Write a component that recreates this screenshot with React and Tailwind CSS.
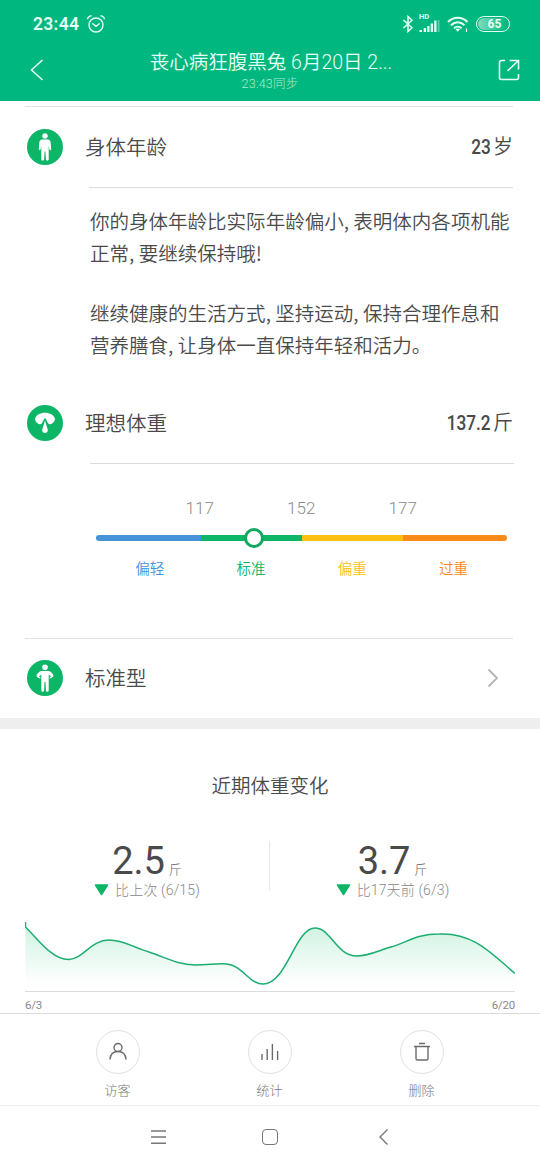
const zones = [
  { name: '偏轻', bar: 'w-[105px] rounded-l-full bg-[#4592d9]', label: 'text-[#4592d9]' },
  { name: '标准', bar: 'w-[101px] bg-[#0db566]', label: 'text-[#0db566]' },
  { name: '偏重', bar: 'w-[101px] bg-[#fdc010]', label: 'text-[#fdc010]' },
  { name: '过重', bar: 'w-[104px] rounded-r-full bg-[#f98a1b]', label: 'text-[#f98a1b]' },
];

const limits = [117, 152, 177];

const changes = [
  { value: '2.5', note: '比上次 (6/15)' },
  { value: '3.7', note: '比17天前 (6/3)' },
];

const curve =
  'M0.5 0V5C12 16 27 38 44 37.5C58 37 66 18 84 18C99 18 107 25 124 30C140 35 152 43 170 43C184 43 192 41 202 42C218 44 224 62 238 62C262 62 270 6 290 6C306 6 311 34 332 34C344 34 355 28 366 25C383 20 392 12 414 12C448 10 467 32 490 51.5';

function StatusBar() {
  return (
    <div className="flex h-12 items-center pl-[33px] pr-[30px] text-[#e4fff4]">
      <span className="w-[53px] text-[17.5px] font-semibold tracking-[0.3px]">23:44</span>
      <svg width="20" height="20" viewBox="0 0 20 20" fill="none" stroke="currentColor" strokeWidth="1.4" strokeLinecap="round">
        <circle cx="10" cy="11" r="7" />
        <path d="M6.8 9.8L10 12.3L13.2 9.8M1.5 4.6C2.2 3.2 3.4 2.2 5 1.8M18.5 4.6C17.8 3.2 16.6 2.2 15 1.8" />
      </svg>
      <div className="flex-1" />
      <svg width="12" height="18" viewBox="0 0 12 18" fill="none" stroke="currentColor" strokeWidth="1.5">
        <path d="M1.5 5L10 12.8L6 16.5V1.5L10 5.2L1.5 13" />
      </svg>
      <div className="ml-[5px] flex w-[21px] flex-col pb-[3px]">
        <span className="h-[7px] text-[7.5px] font-bold leading-[7px]">HD</span>
        <svg width="21" height="12" viewBox="0 0 21 12" fill="currentColor">
          <path d="M0.5 10h2.5v2H0.5zM4.7 8h2.3v4h-2.3zM8.2 6h2.3v6H8.2zM11.7 3.5h2.3v8.5h-2.3zM15.2 0.5h2.3v11.5h-2.3z" />
          <path opacity="0.35" d="M18.7 0H20.5V12H18.7z" />
        </svg>
      </div>
      <svg className="ml-[7px]" width="23" height="17" viewBox="0 0 23 17" fill="none" stroke="currentColor" strokeWidth="2">
        <path d="M1 6C6.5 0.3 15 0.3 20.5 6M4 9.2C8 5.2 13.5 5.2 17.5 9.2M7 12.2C9.2 10.2 12.3 10.2 14.5 12.2" />
        <path d="M8.5 13.3C9.8 12.3 11.7 12.3 13 13.3L10.7 15.8z" fill="currentColor" stroke="none" />
        <path d="M19.5 12.5V16" strokeWidth="1.2" />
      </svg>
      <div className="ml-[6px] flex h-4 w-[34px] items-center rounded-full border-[1.5px] border-current p-px">
        <div className="flex h-full w-[29px] items-center justify-center rounded-full bg-gradient-to-r from-white/50 to-transparent pl-1 text-[12px] font-bold leading-none">65</div>
      </div>
    </div>
  );
}

function Header() {
  return (
    <header className="h-[101px] bg-[#00b87f]">
      <StatusBar />
      <div className="flex h-[46px] items-start justify-between pl-[30px] pr-[20px] text-[#e8fff6]">
        <svg className="mt-[11px]" width="14" height="22" viewBox="0 0 14 22" fill="none" stroke="currentColor" strokeWidth="1.5">
          <path d="M12.5 1L1.5 11L12.5 21" />
        </svg>
        <div className="flex flex-col items-center pt-px">
          <h1 className="h-[27px] whitespace-nowrap text-[19.5px] font-[350] leading-[27px]">丧心病狂腹黑兔 6月20日 2...</h1>
          <span className="mr-0.5 h-4 text-[12.5px] font-light leading-4 tracking-[0.2px] text-[#a9ecd3]">23:43同步</span>
        </div>
        <svg className="mt-[11px]" width="22" height="22" viewBox="0 0 22 22" fill="none" stroke="currentColor" strokeWidth="1.6">
          <path d="M7 1.5H3.5A2 2 0 0 0 1.5 3.5V18.500A2 2 0 0 0 3.500 20.500H18.500A2 2 0 0 0 20.500 18.500V15" />
          <path d="M11.5 1.5H20.5V10.5M20.5 1.5L9.5 12" />
        </svg>
      </div>
    </header>
  );
}

function Badge({ children }) {
  return (
    <svg width="36" height="36" viewBox="0 0 36 36" fill="#fff">
      <circle cx="18" cy="18" r="18" fill="#0db566" />
      {children}
    </svg>
  );
}

function Row({ icon, title, children, className }) {
  return (
    <div className={`flex items-center pl-[27px] text-[#4a4a4a] ${className}`}>
      {icon}
      <h2 className="ml-[22px] flex-1 pt-[3px] text-[20.5px] font-[350]">{title}</h2>
      {children}
    </div>
  );
}

function Amount({ value, unit }) {
  return (
    <div className="flex items-baseline pt-px text-[20px] font-[350]">
      <span className="inline-block origin-right scale-x-[0.82] text-[21px] font-medium">{value}</span>
      <span className="ml-[2px]">{unit}</span>
    </div>
  );
}

function WeightScale() {
  return (
    <div className="h-[174px] pl-[96px] pr-[33px] pt-[32px]">
      <div className="flex h-6 pl-[53px] text-[17px] font-light leading-6 text-[#8c8c8c]">
        {limits.map((n) => (
          <span key={n} className="w-[101.5px] text-center">{n}</span>
        ))}
      </div>
      <div className="relative mt-[15px] flex h-[6px]">
        {zones.map((z) => (
          <div key={z.name} className={z.bar} />
        ))}
        <div className="absolute -top-[7px] left-[148px] size-5 rounded-full border-[3px] border-[#14a760] bg-white" />
      </div>
      <div className="mt-[17px] flex pl-[3px] text-[14.5px] font-[350] leading-6">
        {zones.map((z) => (
          <span key={z.name} className={`w-[101.3px] text-center ${z.label}`}>{z.name}</span>
        ))}
      </div>
    </div>
  );
}

function Trend() {
  return (
    <section className="h-[284px]">
      <h2 className="pt-[44px] text-center text-[19.5px] font-[350] leading-7 text-[#4a4a4a]">近期体重变化</h2>
      <div className="mt-[40px] flex h-[60px]">
        {changes.map((c, i) => (
          <div key={c.value} className={i === 0 ? 'w-[270px] pl-[25px]' : 'w-[270px] pr-[25px]'}>
            <div className={i === 0 ? 'flex h-[50px] flex-col items-center border-r border-[#e8e8e8]' : 'flex h-[50px] flex-col items-center'}>
              <div className="flex h-[37px] items-baseline leading-[40px] text-[#4a4a4a]">
                <span className="text-[38px]">{c.value}</span>
                <span className="ml-1 text-[13px] font-light text-[#666]">斤</span>
              </div>
              <div className="flex items-center whitespace-nowrap text-[14px] font-light leading-6 tracking-[0.15px] text-[#888]">
                <svg className="mr-[6px]" width="15" height="12" viewBox="0 0 15 12">
                  <path d="M1.5 1H13.5L7.5 10.5Z" fill="#0db566" stroke="#0db566" strokeWidth="1.5" strokeLinejoin="round" />
                </svg>
                {c.note}
              </div>
            </div>
          </div>
        ))}
      </div>
      <div className="mx-[25px] mt-[21px] h-[70px] border-b border-[#dcdcdc]">
        <svg width="490" height="69" viewBox="0 0 490 69" fill="none">
          <defs>
            <linearGradient id="fade" x1="0" y1="0" x2="0" y2="1">
              <stop offset="0" stopColor="#cdf2e0" />
              <stop offset="0.9" stopColor="#fff" />
            </linearGradient>
          </defs>
          <path d={`${curve}V69H0.5Z`} fill="url(#fade)" />
          <path d={curve} stroke="#1bae70" strokeWidth="1.5" />
        </svg>
      </div>
      <div className="flex justify-between px-[25px] pt-[5px] text-[11.5px] leading-[17px] tracking-[-0.2px] text-[#888]">
        <span>6/3</span>
        <span>6/20</span>
      </div>
    </section>
  );
}

function Action({ label, children }) {
  return (
    <button className="flex w-[152px] flex-col items-center pt-[15.5px]">
      <span className="flex size-11 items-center justify-center rounded-full border border-[#e2e2e2]">
        <svg width="20" height="20" viewBox="0 0 20 20" fill="none" stroke="#6b6b6b" strokeWidth="1.4">
          {children}
        </svg>
      </span>
      <span className="mt-[6px] text-[13px] font-light leading-[22px] text-[#777]">{label}</span>
    </button>
  );
}

export default function App() {
  return (
    <div className="h-[1170px] w-[540px] overflow-hidden bg-white font-['Roboto','Noto_Sans_CJK_SC',sans-serif]">
      <Header />

      <main>
        <div className="ml-[25px] mr-[27px] mt-[5px] border-t border-[#e2e2e2]" />
        <Row
          className="h-20 pr-[27px]"
          title="身体年龄"
          icon={
            <Badge>
              <circle cx="18" cy="7" r="2.7" />
              <path d="M15 10.5H21C22.7 10.5 23.5 12 23.7 14L24.2 20C24.2 21.5 22.7 21.5 22.4 20.3L21.7 16.5V30.5C21.7 32 19 32 18.9 30.5L18.4 22.5H17.6L17.1 30.5C17 32 14.3 32 14.3 30.5V16.5L13.6 20.3C13.3 21.5 11.8 21.5 11.8 20L12.3 14C12.5 12 13.3 10.5 15 10.5Z" />
            </Badge>
          }
        >
          <Amount value="23" unit="岁" />
        </Row>
        <div className="ml-[89px] mr-[27px] border-t border-[#dcdcdc]" />

        <div className="pl-[90px] pt-[17px] font-['Noto_Sans_CJK_SC',sans-serif] text-[19.53px] font-[350] leading-8 text-[#4a4a4a]">
          <p>你的身体年龄比实际年龄偏小, 表明体内各项机能<br />正常, 要继续保持哦!</p>
          <p className="mt-7">继续健康的生活方式, 坚持运动, 保持合理作息和<br />营养膳食, 让身体一直保持年轻和活力。</p>
        </div>

        <Row
          className="mt-[22px] h-20 pr-[27px]"
          title="理想体重"
          icon={
            <Badge>
              <path d="M8 14C9.5 5.5 26.5 5.5 28 14C28 16 25.5 18.8 23.5 19.2C21.5 19.5 21 18.5 20.4 17L18.8 13.8C18.4 13 17.6 13 17.2 13.8L15.600 17C15 18.500 14.500 19.500 12.500 19.200C10.500 18.800 8 16 8 14Z" />
              <path d="M18 15.500L20.700 24.500A2.800 2.800 0 1 1 15.300 24.500Z" />
            </Badge>
          }
        >
          <Amount value="137.2" unit="斤" />
        </Row>
        <div className="ml-[90px] mr-[26px] border-t border-[#dcdcdc]" />
        <WeightScale />

        <div className="ml-[25px] mr-[27px] border-t border-[#e2e2e2]" />
        <Row
          className="h-[79px] pb-px pr-[41px]"
          title="标准型"
          icon={
            <Badge>
              <circle cx="18" cy="7.2" r="2.8" />
              <path d="M14 11H22C23 11 26.5 14 26.5 15.800C26.5 17 23.8 18.8 22.8 18.6C22 18.2 22.500 17.200 24 16.200L21.700 14.800V30.5C21.7 32.3 19 32.3 18.9 30.5L18.5 22H17.5L17.1 30.5C17 32.3 14.3 32.3 14.3 30.5V14.8L12 16.2C13.500 17.200 14 18.200 13.200 18.600C12.2 18.8 9.5 17 9.5 15.8C9.5 14 13 11 14 11Z" />
            </Badge>
          }
        >
          <svg width="12" height="20" viewBox="0 0 12 20" fill="none" stroke="#b5b5b5" strokeWidth="1.8">
            <path d="M1.5 1.5L10 10L1.5 18.5" />
          </svg>
        </Row>
        <div className="h-[11px] bg-[#eeeeee]" />
        <Trend />
      </main>

      <div className="flex h-[92px] justify-center border-t border-[#dadada] pr-px">
        <Action label="访客">
          <circle cx="10" cy="5.5" r="4" />
          <path d="M2 17.5C2.3 12.5 5 9.5 10 9.5C15 9.5 17.7 12.5 18 17.5" />
        </Action>
        <Action label="统计">
          <path d="M2 12V18M7.2 7V18M12.4 2V18M17.6 9V18" />
        </Action>
        <Action label="删除">
          <path d="M7 1.5H13M2 4.5H18M4 4.5V16.5A1.500 1.500 0 0 0 5.500 18H14.500A1.500 1.500 0 0 0 16 16.500V4.500" />
        </Action>
      </div>

      <nav className="h-[65px] border-t border-[#ececec] pl-[151px]">
        <div className="flex h-[62px] w-[238px] items-center justify-between">
          <svg width="16" height="16" viewBox="0 0 16 16" stroke="#777" strokeWidth="1.4">
            <path d="M0 2H15M0 8H15M0 14.2H15" />
          </svg>
          <div className="mr-[6px] size-4 rounded-[4px] border-[1.5px] border-[#777]" />
          <svg width="10" height="16" viewBox="0 0 10 16" fill="none" stroke="#777" strokeWidth="1.4">
            <path d="M8.5 0.5L1 8L8.5 15.5" />
          </svg>
        </div>
      </nav>
    </div>
  );
}
